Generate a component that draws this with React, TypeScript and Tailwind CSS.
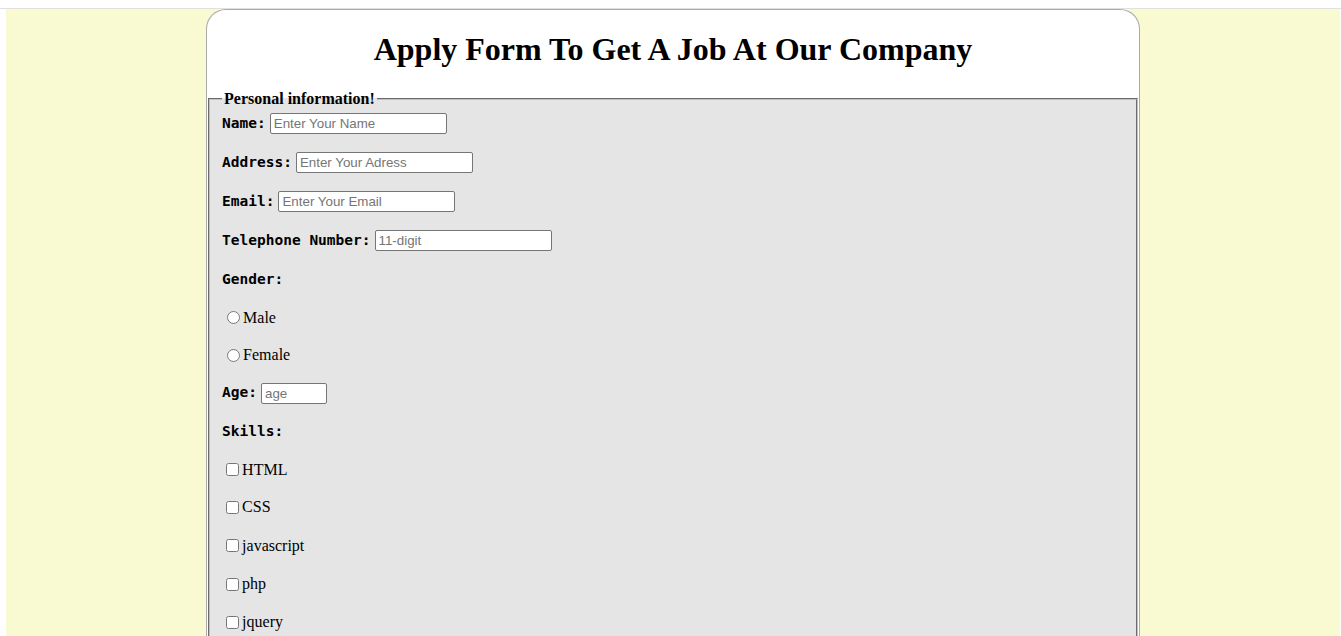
import React from "react";

const serif = "font-['Liberation_Serif','Times_New_Roman',serif]";
const mono = "font-['DejaVu_Sans_Mono',monospace]";

function Label({ children }: { children: React.ReactNode }) {
  return <span className={`${mono} font-bold text-[14.5px] mr-[4px] text-black`}>{children}</span>;
}

function TextInput({ placeholder, w = "w-[177px]" }: { placeholder: string; w?: string }) {
  return (
    <input
      type="text"
      placeholder={placeholder}
      className={`${w} h-[21px] bg-white border border-[#767676] rounded-[2px] px-[3px] text-[13.33px] font-['Liberation_Sans',Arial,sans-serif] text-black placeholder:text-[#757575] outline-none`}
    />
  );
}

function Choice({ type, label, name }: { type: "radio" | "checkbox"; label: string; name?: string }) {
  return (
    <label className={`flex items-center ${serif} text-[16px] text-black`}>
      <input
        type={type}
        name={name}
        className={type === "radio" ? "m-0 ml-[5px] mr-[3px] w-[13px] h-[13px]" : "m-0 ml-[4px] mr-[3px] w-[13px] h-[13px]"}
      />
      {label}
    </label>
  );
}

export default function App() {
  const skills = [
    { label: "HTML", h: "h-[37px]" },
    { label: "CSS", h: "h-[38px]" },
    { label: "javascript", h: "h-[39px]" },
    { label: "php", h: "h-[38px]" },
    { label: "jquery", h: "h-[38px]" },
  ];

  return (
    <div className="h-[636px] overflow-hidden bg-white">
      {/* top strip */}
      <div className="h-[9px] border-b border-[#e0e0e0]" />

      <div className="ml-[6px] mr-[1px] h-[640px] bg-[#fafad2]">
        <div className="mx-auto w-[70%] h-[700px] bg-white border border-b-0 border-[#aaaaaa] rounded-t-[20px]">
          <h1 className={`${serif} text-[32px] font-bold text-center text-black mt-[21px] mb-[20px] leading-[36px]`}>
            Apply Form To Get A Job At Our Company
          </h1>

          <fieldset className="mx-[1px] px-[12px] pb-[10px] border-2 [border-style:groove] border-[#c0c0c0] bg-[#e5e5e5]">
            <legend className={`${serif} font-bold text-[16px] px-[2px] text-black`}>Personal information!</legend>

            <div className="flex flex-col -mt-[7px]">
              <div className="h-[39px] flex items-center">
                <Label>Name:</Label>
                <TextInput placeholder="Enter Your Name" />
              </div>
              <div className="h-[39px] flex items-center">
                <Label>Address:</Label>
                <TextInput placeholder="Enter Your Adress" />
              </div>
              <div className="h-[39px] flex items-center">
                <Label>Email:</Label>
                <TextInput placeholder="Enter Your Email" />
              </div>
              <div className="h-[39px] flex items-center">
                <Label>Telephone Number:</Label>
                <TextInput placeholder="11-digit" />
              </div>
              <div className="h-[39px] flex items-center">
                <Label>Gender:</Label>
              </div>
              <div className="h-[37px] flex items-center">
                <Choice type="radio" name="gender" label="Male" />
              </div>
              <div className="h-[38px] flex items-center">
                <Choice type="radio" name="gender" label="Female" />
              </div>
              <div className="h-[38px] flex items-center">
                <Label>Age:</Label>
                <TextInput placeholder="age" w="w-[66px]" />
              </div>
              <div className="h-[39px] flex items-center">
                <Label>Skills:</Label>
              </div>
              {skills.map((s) => (
                <div key={s.label} className={`${s.h} flex items-center`}>
                  <Choice type="checkbox" label={s.label} />
                </div>
              ))}
            </div>
          </fieldset>
        </div>
      </div>
    </div>
  );
}
